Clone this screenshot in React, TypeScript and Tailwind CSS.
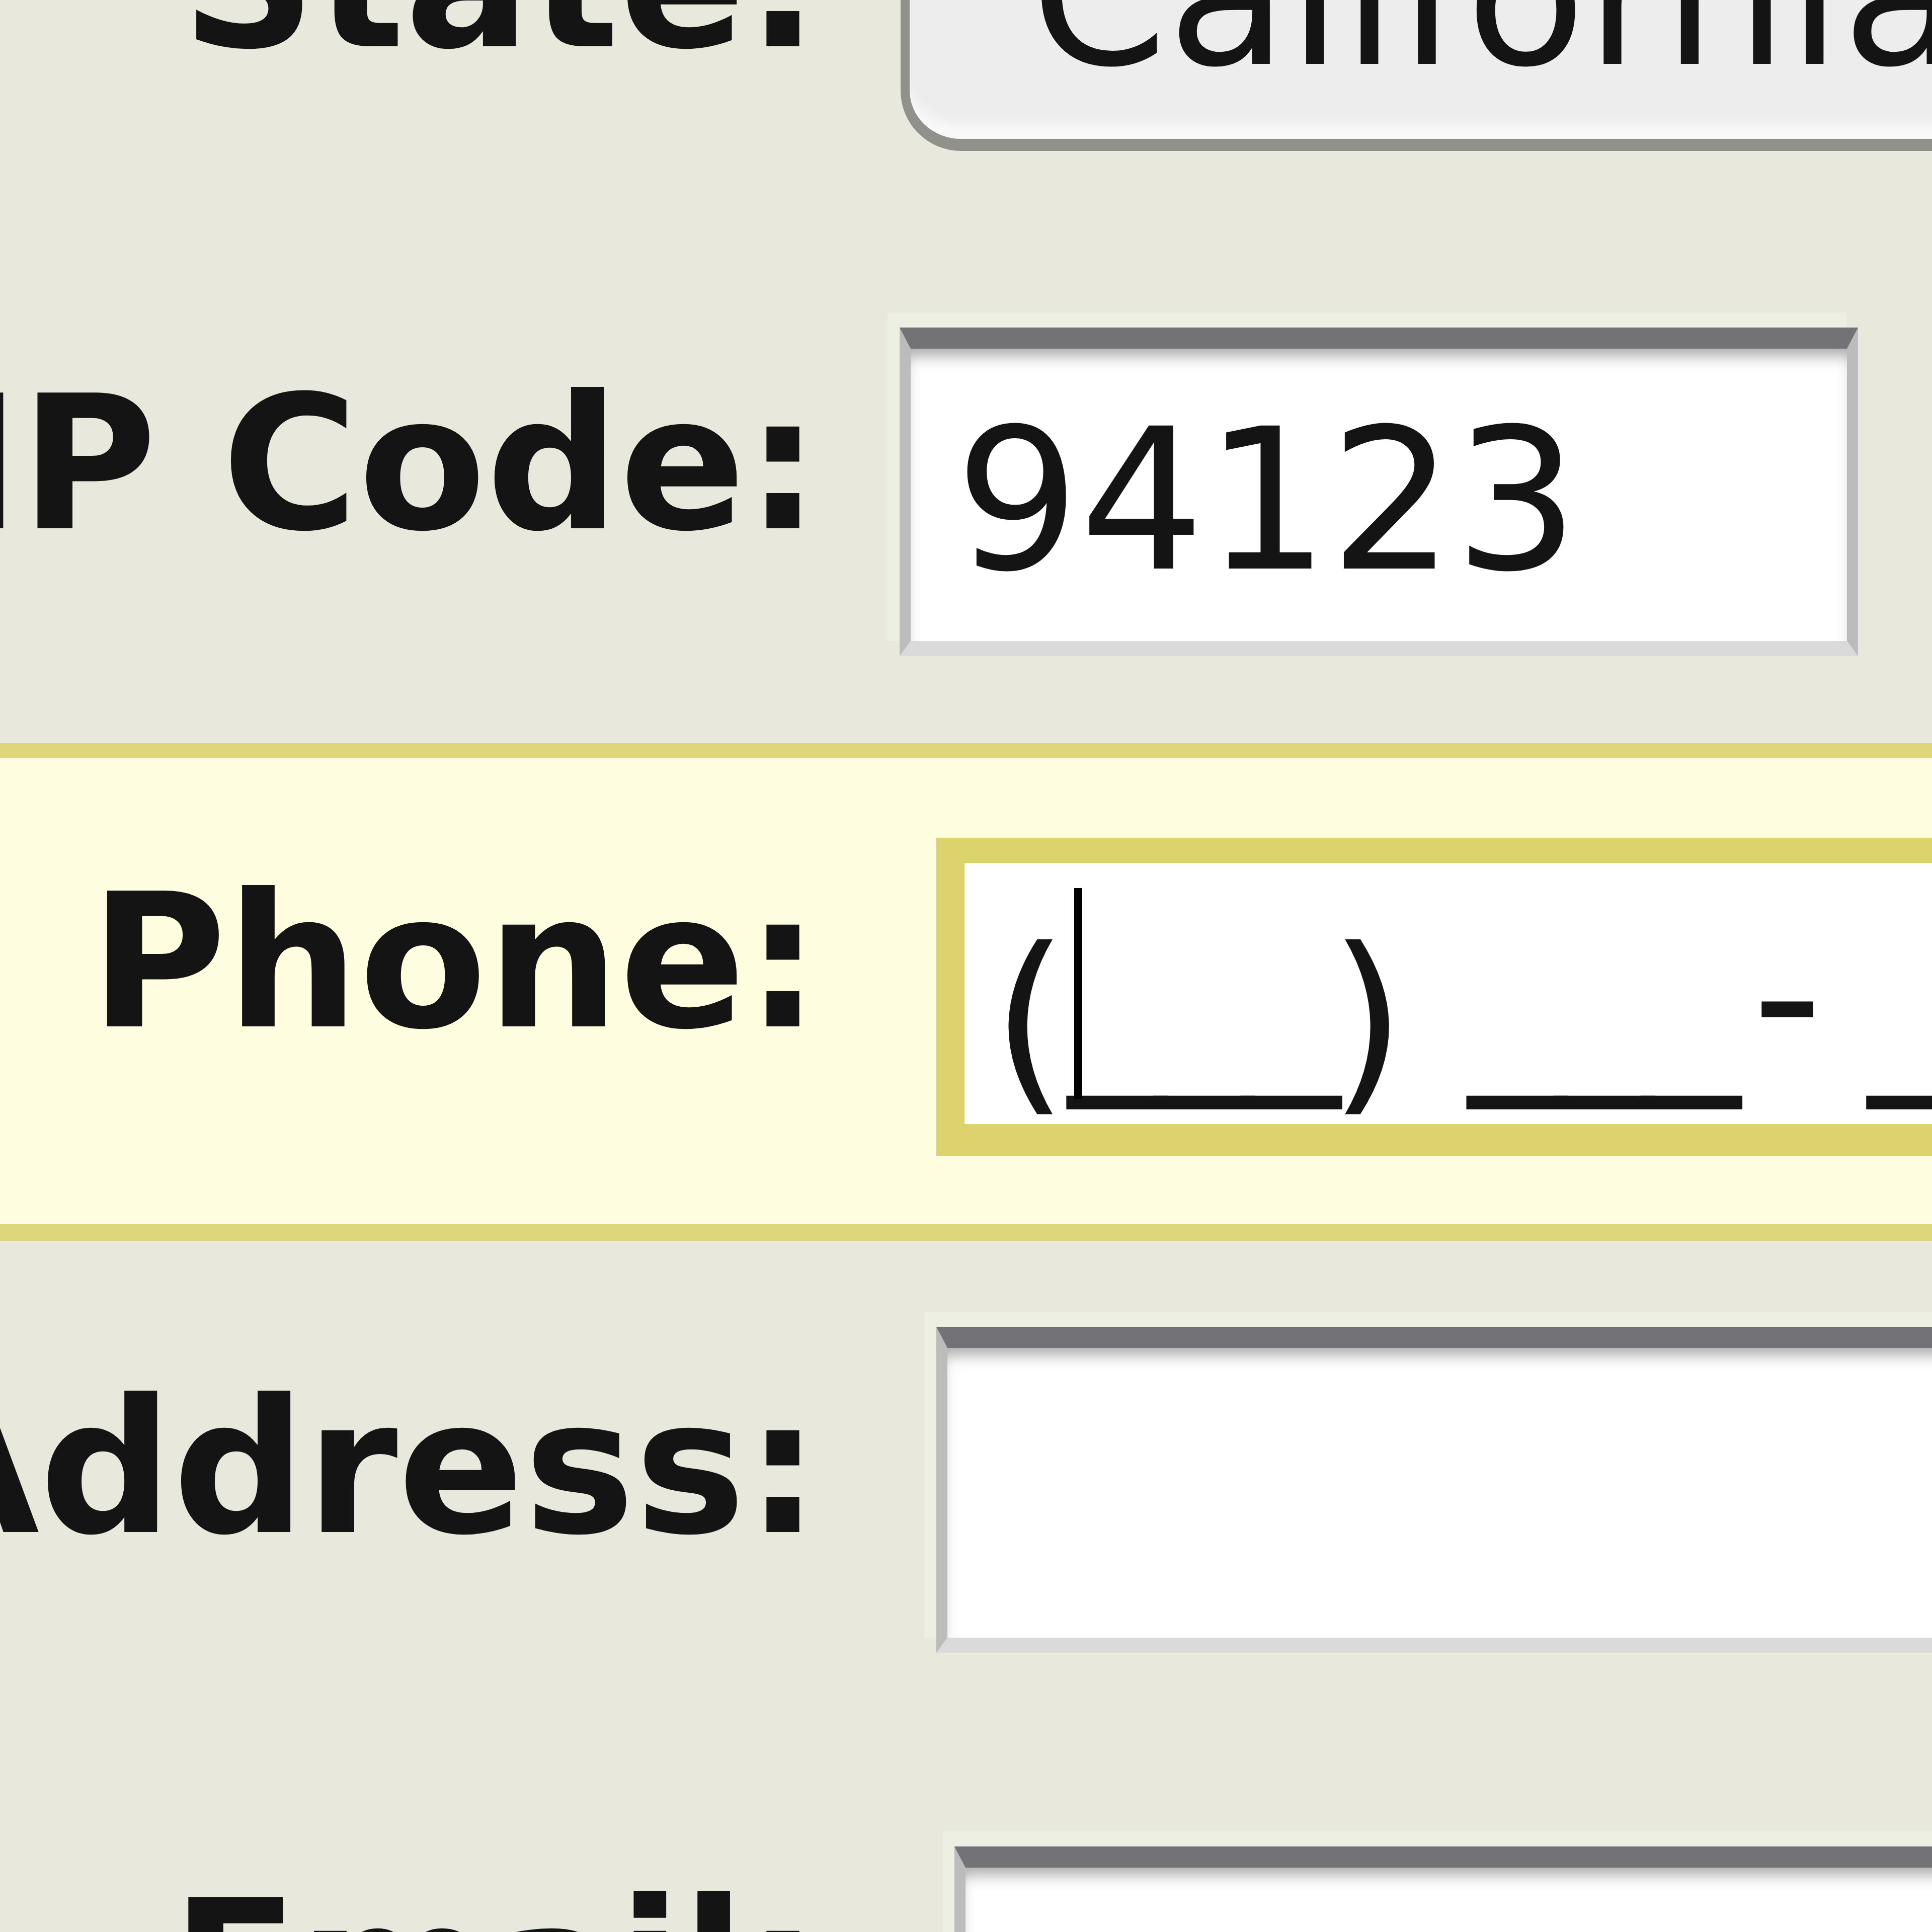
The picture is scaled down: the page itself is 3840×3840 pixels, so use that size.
import React from "react";

const label =
  "w-[1630px] shrink-0 flex justify-end whitespace-nowrap text-[370px] leading-none font-bold";

const box =
  "shrink-0 bg-white border-t-[42px] border-t-[#737377] border-x-[22px] border-x-[#bcbcbc] border-b-[30px] border-b-[#dadada] shadow-[inset_0_26px_30px_-12px_#a9a9a9,-24px_-30px_0_0_#edefe3]";

export default function App() {
  return (
    <div className="w-[3840px] h-[3840px] overflow-hidden bg-[#e8e9dc] text-[#141414] font-['DejaVu_Sans',sans-serif]">
      {/* State */}
      <div className="flex h-[400px] items-start">
        <div className={`${label} -mt-[221px]`}>State:</div>
        <div className="ml-[160px] -mt-[260px] h-[560px] w-[2400px] shrink-0 rounded-bl-[120px] bg-[#ededed] border-l-[18px] border-b-[24px] border-[#8f918a] shadow-[inset_0_-45px_20px_-15px_#f8f8f8]">
          <div className="pl-[240px] pt-[57px] text-[390px] leading-none whitespace-nowrap">
            California
          </div>
        </div>
      </div>

      {/* ZIP */}
      <div className="flex h-[1077px] items-start">
        <div className={`${label} mt-[337px]`}>ZIP Code:</div>
        <div className={`${box} ml-[158px] mt-[251px] h-[653px] w-[1905px]`}>
          <div className="pl-[88px] pt-[107px] text-[390px] leading-none">94123</div>
        </div>
      </div>

      {/* Phone (focused row) */}
      <div className="flex h-[990px] items-start border-t-[30px] border-b-[34px] border-[#ddd67a] bg-[#fffde0]">
        <div className={`${label} mt-[220px]`}>Phone:</div>
        <div className="relative ml-[231px] mt-[158px] h-[633px] w-[2400px] shrink-0 bg-white border-t-[50px] border-b-[64px] border-x-[56px] border-[#dcd36c]">
          <div className="pl-[54px] pt-[68px] text-[390px] leading-none whitespace-nowrap">
            (<span className="align-[50px] tracking-[-22px]">___</span>){" "}
            <span className="align-[50px] tracking-[-22px]">___</span>
            <span className="ml-[45px] align-[50px] tracking-[90px]">-</span>
            <span className="align-[50px] tracking-[-22px]">____</span>
          </div>
          {/* caret */}
          <span className="absolute left-[218px] top-[50px] h-[420px] w-[16px] bg-black" />
        </div>
      </div>

      {/* Address */}
      <div className="flex h-[1033px] items-start">
        <div className={`${label} mt-[265px]`}>Address:</div>
        <div className={`${box} ml-[231px] mt-[170px] h-[648px] w-[2400px]`} />
      </div>

      {/* Email */}
      <div className="flex items-start">
        <div className={`${label} mt-[227px]`}>Email:</div>
        <div className={`${box} ml-[267px] mt-[170px] h-[600px] w-[2400px]`} />
      </div>
    </div>
  );
}
